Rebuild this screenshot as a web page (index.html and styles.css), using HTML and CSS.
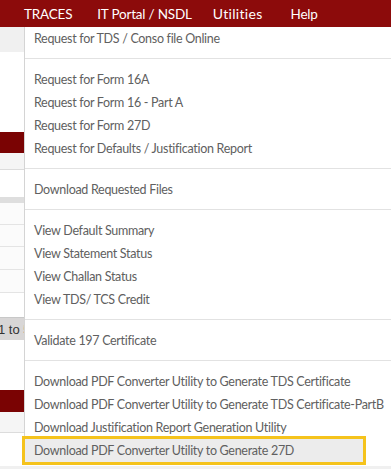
FILE: index.html
```html
<!DOCTYPE html>
<html lang="en">
<head>
  <meta charset="UTF-8">
  <title>TRACES - Utilities</title>
  <link rel="stylesheet" href="styles.css">
</head>
<body>
  <div class="topbar">
    <a class="nav-item">TRACES</a>
    <a class="nav-item portal">IT Portal / NSDL</a>
    <a class="nav-item utilities">Utilities</a>
    <a class="nav-item">Help</a>
  </div>

  <!-- page content behind the dropdown -->
  <div class="page">
    <div class="blk shade h25"></div>
    <div class="blk h80"></div>
    <div class="blk band h21"></div>
    <div class="blk light h17"></div>
    <div class="blk h27"></div>
    <div class="blk strip h6"></div>
    <div class="blk line h22"></div>
    <div class="blk line h22"></div>
    <div class="blk line h23"></div>
    <div class="blk line h23"></div>
    <div class="blk h24"></div>
    <div class="blk pager h23">1 to 5</div>
    <div class="blk h50"></div>
    <div class="blk band h22"></div>
    <div class="blk light h21"></div>
    <div class="blk h33"></div>
    <div class="blk shade h25"></div>
  </div>

  <ul class="dropdown">
    <li>Request for TDS / Conso file Online</li>
    <li class="sep"></li>
    <li>Request for Form 16A</li>
    <li>Request for Form 16 - Part A</li>
    <li>Request for Form 27D</li>
    <li>Request for Defaults / Justification Report</li>
    <li class="sep"></li>
    <li>Download Requested Files</li>
    <li class="sep"></li>
    <li>View Default Summary</li>
    <li>View Statement Status</li>
    <li>View Challan Status</li>
    <li>View TDS/ TCS Credit</li>
    <li class="sep"></li>
    <li>Validate 197 Certificate</li>
    <li class="sep"></li>
    <li>Download PDF Converter Utility to Generate TDS Certificate</li>
    <li>Download PDF Converter Utility to Generate TDS Certificate-PartB</li>
    <li>Download Justification Report Generation Utility</li>
    <li class="active">Download PDF Converter Utility to Generate 27D</li>
  </ul>
</body>
</html>
```

FILE: styles.css
```css
body {
  margin: 0;
  font-family: Lato, "Open Sans", sans-serif;
  background: #fff;
  overflow: hidden;
}

.topbar {
  height: 27px;
  background-color: #8c0b0b;
  display: flex;
  align-items: center;
  padding-left: 24px;
}

.nav-item {
  color: #fff;
  font-size: 13.5px;
  letter-spacing: -0.2px;
  margin-right: 25px;
}

.nav-item.portal {
  margin-right: 21px;
}

.nav-item.utilities {
  font-size: 14px;
  letter-spacing: 0.3px;
  margin-right: 28px;
}

.page .blk {
  font-family: "Liberation Sans", Arial, sans-serif;
}

.shade { background: #f0f0f0; }
.band { background: #7a0303; }
.light { background: #f5f5f5; border-bottom: 1px solid #dcdcdc; box-sizing: border-box; }
.strip { background: #dedede; }
.line { background: #fbfbfb; border-bottom: 1px solid #e4e4e4; box-sizing: border-box; }

.pager {
  width: 24px;
  overflow: hidden;
  white-space: nowrap;
  background: #d8d6d6;
  color: #333;
  font-size: 13px;
  line-height: 23px;
  border-top: 1px solid #c8c8c8;
  box-sizing: border-box;
  text-indent: -2px;
}

.h6 { height: 6px; }
.h17 { height: 17px; }
.h21 { height: 21px; }
.h22 { height: 22px; }
.h23 { height: 23px; }
.h24 { height: 24px; }
.h25 { height: 25px; }
.h27 { height: 27px; }
.h33 { height: 33px; }
.h50 { height: 50px; }
.h80 { height: 80px; }

.dropdown {
  position: absolute;
  top: 27px;
  left: 24px;
  right: 0;
  margin: 0;
  padding: 0;
  list-style: none;
  background: #fff;
  border-left: 1px solid #d4d4d4;
  font-size: 12.5px;
  letter-spacing: -0.3px;
  color: #606060;
}

.dropdown li {
  height: 23px;
  line-height: 23px;
  padding-left: 9px;
  white-space: nowrap;
}

.dropdown li.sep {
  height: 1px;
  padding: 0;
  margin: 8px 0 9px;
  background: #e2e2e2;
}

.dropdown li.active {
  background: #ececec;
  margin-right: 28px;
  outline: 3px solid #f5c31c;
}
```
